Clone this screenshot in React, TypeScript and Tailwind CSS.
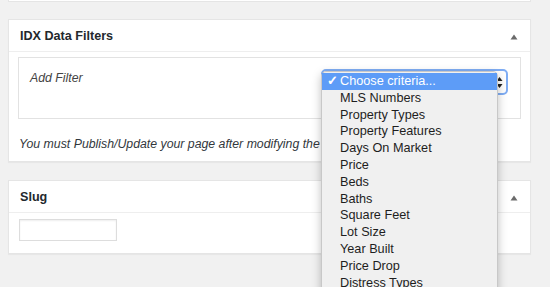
const criteria = [
  'MLS Numbers',
  'Property Types',
  'Property Features',
  'Days On Market',
  'Price',
  'Beds',
  'Baths',
  'Square Feet',
  'Lot Size',
  'Year Built',
  'Price Drop',
  'Distress Types',
  'Status',
];

function Caret() {
  return (
    <svg width="8" height="6" viewBox="0 0 8 6" className="block">
      <path d="M4 0.5 L7.5 5.5 L0.5 5.5 Z" fill="#6b6b6b" />
    </svg>
  );
}

function PanelHeader({ title }: { title: string }) {
  return (
    <div className="flex h-[32px] items-center justify-between border-b border-[#eeeeee] pl-[11px] pr-[12px] pt-[2px]">
      <h2 className="text-[12.6px] font-bold text-[#23282d]">{title}</h2>
      <Caret />
    </div>
  );
}

export default function App() {
  return (
    <div
      className="relative h-[287px] w-[550px] overflow-hidden bg-[#f1f1f1]"
      style={{ fontFamily: '"Liberation Sans", Arial, sans-serif' }}
    >
      {/* previous box, cut off at the top */}
      <div className="ml-[8px] h-[2px] w-[523px] border-x border-b border-[#e5e5e5] bg-white" />

      {/* IDX Data Filters */}
      <div className="ml-[8px] mt-[17px] w-[523px] border border-[#e5e5e5] bg-white shadow-[0_1px_1px_rgba(0,0,0,0.04)]">
        <PanelHeader title="IDX Data Filters" />
        <div className="px-[9px] pt-[5px]">
          <div className="flex h-[62px] justify-between border border-[#e2e2e2] pl-[11px] pr-[12px]">
            <p className="pt-[11px] text-[12.3px] italic text-[#444]">Add Filter</p>

            {/* open select */}
            <div className="relative mt-[11px] h-[26px] w-[187px]">
              <div className="flex h-full w-full items-center justify-end rounded-[5px] border-2 border-[#7fadf4] bg-white pr-[3px]">
                <svg width="7" height="13" viewBox="0 0 7 13">
                  <path d="M3.5 1 L6.5 5 L0.5 5 Z" fill="#222" />
                  <path d="M3.5 12 L6.5 8 L0.5 8 Z" fill="#222" />
                </svg>
              </div>
              <ul className="absolute left-0 top-[2px] z-10 w-[177px] rounded-t-[5px] border border-[#c8c8c8] bg-[#f0f0f0] pt-[1px] text-[12.7px] text-[#1e1e1e] shadow-[0_3px_10px_rgba(0,0,0,0.25)]">
                <li className="relative h-[16.8px] bg-[#5d9cf7] pl-[18px] leading-[16.8px] text-white">
                  <span className="absolute left-[5px] top-0 font-bold">✓</span>
                  Choose criteria...
                </li>
                {criteria.map((c) => (
                  <li key={c} className="h-[16.8px] pl-[18px] leading-[16.8px]">
                    {c}
                  </li>
                ))}
              </ul>
            </div>
          </div>
        </div>
        <p className="px-[10px] pb-[8px] pt-[16px] text-[12.3px] italic text-[#32373c]">
          You must Publish/Update your page after modifying the filters.
        </p>
      </div>

      {/* Slug */}
      <div className="ml-[8px] mt-[18px] w-[523px] border border-[#e5e5e5] bg-white shadow-[0_1px_1px_rgba(0,0,0,0.04)]">
        <PanelHeader title="Slug" />
        <div className="px-[10px] pb-[12px] pt-[6px]">
          <input
            type="text"
            className="block h-[22px] w-[98px] border border-[#dddddd] bg-white shadow-[inset_0_1px_2px_rgba(0,0,0,0.07)] outline-none"
          />
        </div>
      </div>
    </div>
  );
}
